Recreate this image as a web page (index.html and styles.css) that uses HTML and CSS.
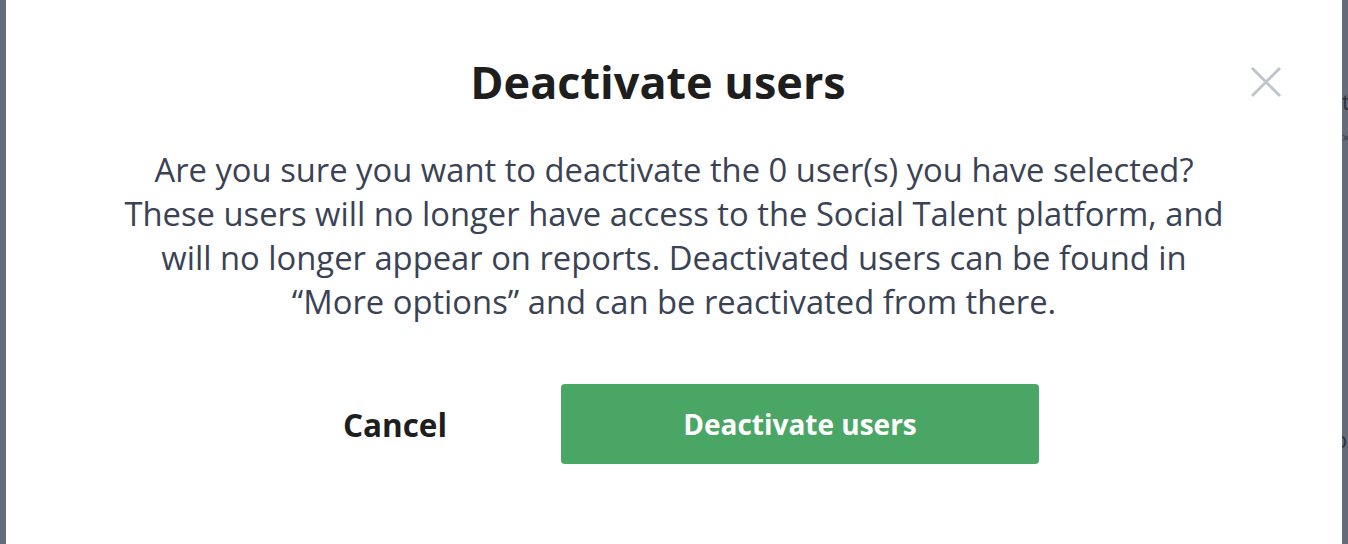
FILE: index.html
```html
<!DOCTYPE html>
<html lang="en">
<head>
    <meta charset="UTF-8">
    <meta name="viewport" content="width=device-width, initial-scale=1.0">
    <title>Deactivate users</title>
    <link rel="stylesheet" href="styles.css">
</head>
<body>
    <div class="page-behind">
        <span class="peek peek-t">t</span>
        <span class="peek peek-x">×</span>
        <span class="peek peek-o">o</span>
    </div>

    <div class="modal">
        <div class="modal-header">
            <h1>Deactivate users</h1>
            <button class="close" aria-label="Close">
                <svg width="32" height="32" viewBox="0 0 32 32">
                    <path d="M2 2 L30 30 M30 2 L2 30" stroke="#c1c5cb" stroke-width="3" fill="none"/>
                </svg>
            </button>
        </div>
        <p class="message">
            Are you sure you want to deactivate the 0 user(s) you have selected?<br>
            These users will no longer have access to the Social Talent platform, and<br>
            will no longer appear on reports. Deactivated users can be found in<br>
            “More options” and can be reactivated from there.
        </p>
        <div class="actions">
            <button class="btn-cancel">Cancel</button>
            <button class="btn-confirm">Deactivate users</button>
        </div>
    </div>
</body>
</html>
```

FILE: styles.css
```css
body {
    margin: 0;
    height: 544px;
    overflow: hidden;
    background-color: #646b79;
    font-family: "Open Sans", Arial, sans-serif;
    display: flex;
    justify-content: center;
}

.page-behind {
    position: absolute;
    right: 0;
    top: 0;
    width: 6px;
    height: 100%;
    overflow: hidden;
}

.peek {
    position: absolute;
    left: 0;
    color: #2c313b;
    font-size: 22px;
}

.peek-t {
    top: 86px;
}

.peek-x {
    top: 128px;
    font-size: 14px;
    color: #3a3f48;
}

.peek-o {
    top: 424px;
    left: -8px;
}

.modal {
    width: 1336px;
    background-color: #ffffff;
    padding: 52px 60px 0 60px;
    box-sizing: border-box;
}

.modal-header {
    display: flex;
    align-items: center;
}

.modal-header h1 {
    flex: 1;
    margin: 0;
    text-align: center;
    font-size: 45px;
    font-weight: 700;
    color: #1e1e1e;
    line-height: 60px;
}

.close {
    background: none;
    border: none;
    padding: 0;
    width: 32px;
    height: 32px;
    cursor: pointer;
    display: flex;
}

.message {
    margin: 36px 0 0 0;
    text-align: center;
    font-size: 32.75px;
    line-height: 44px;
    color: #3a4356;
}

.actions {
    display: flex;
    justify-content: center;
    gap: 80px;
    margin-top: 60px;
}

.actions button {
    font-family: "Open Sans", Arial, sans-serif;
    font-weight: 700;
    font-size: 28px;
    height: 80px;
    border: none;
    cursor: pointer;
}

.btn-cancel {
    width: 172px;
    background: none;
    color: #1e1e1e;
    font-size: 31.5px !important;
}

.btn-confirm {
    width: 478px;
    background-color: #4aa665;
    color: white;
    border-radius: 4px;
}

    .btn-confirm:hover {
        background-color: #419459;
    }
```
